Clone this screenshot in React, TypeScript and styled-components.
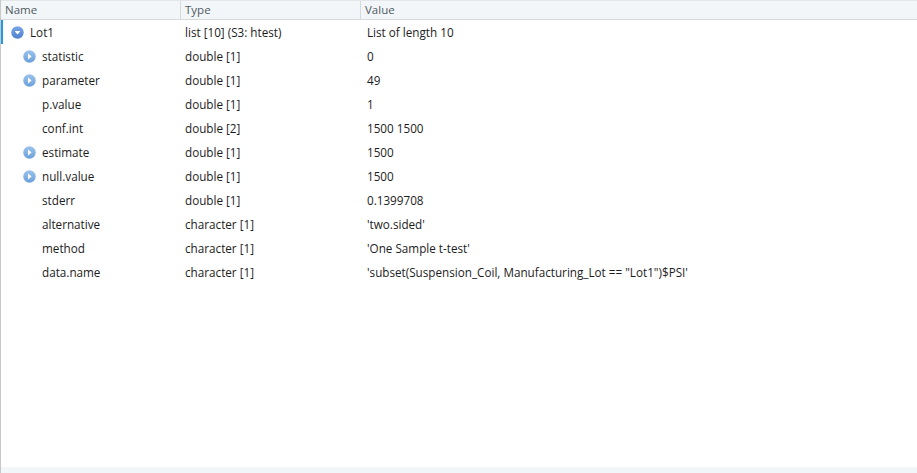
import styled, { createGlobalStyle } from 'styled-components';

const GlobalStyle = createGlobalStyle`
  html, body {
    margin: 0;
    padding: 0;
    background: #ffffff;
  }
  body {
    font-family: 'Open Sans', 'Noto Sans', 'Liberation Sans', sans-serif;
    font-size: 11.7px;
  }
`;

type Item = {
  name: string;
  type: string;
  value: string;
  expandable?: boolean;
};

const children: Item[] = [
  { name: 'statistic', type: 'double [1]', value: '0', expandable: true },
  { name: 'parameter', type: 'double [1]', value: '49', expandable: true },
  { name: 'p.value', type: 'double [1]', value: '1' },
  { name: 'conf.int', type: 'double [2]', value: '1500 1500' },
  { name: 'estimate', type: 'double [1]', value: '1500', expandable: true },
  { name: 'null.value', type: 'double [1]', value: '1500', expandable: true },
  { name: 'stderr', type: 'double [1]', value: '0.1399708' },
  { name: 'alternative', type: 'character [1]', value: "'two.sided'" },
  { name: 'method', type: 'character [1]', value: "'One Sample t-test'" },
  {
    name: 'data.name',
    type: 'character [1]',
    value: `'subset(Suspension_Coil, Manufacturing_Lot == "Lot1")$PSI'`,
  },
];

const ExpandIcon = ({ open, dark }: { open?: boolean; dark?: boolean }) => (
  <svg width="13" height="13" viewBox="0 0 13 13">
    <defs>
      <linearGradient id={dark ? 'gd' : 'gl'} x1="0" y1="0" x2="0" y2="1">
        <stop offset="0" stopColor={dark ? '#7aa6e6' : '#9cc4ec'} />
        <stop offset="1" stopColor={dark ? '#4f80d0' : '#6ba0da'} />
      </linearGradient>
    </defs>
    <circle cx="6.5" cy="6.5" r="6.2" fill={`url(#${dark ? 'gd' : 'gl'})`} />
    {open ? (
      <path d="M3.6 5 L9.4 5 L6.5 8.4 Z" fill="#ffffff" />
    ) : (
      <path d="M5 3.6 L8.6 6.5 L5 9.4 Z" fill="#ffffff" />
    )}
  </svg>
);

const App = () => {
  return (
    <>
      <GlobalStyle />
      <Pane>
        <Header>
          <HeadCell width={180}>Name</HeadCell>
          <HeadCell width={180}>Type</HeadCell>
          <HeadCell>Value</HeadCell>
        </Header>
        <Body>
          <Row selected>
            <NameCell indent={10}>
              <IconSlot>
                <ExpandIcon open dark />
              </IconSlot>
              Lot1
            </NameCell>
            <TypeCell>list [10] (S3: htest)</TypeCell>
            <ValueCell>List of length 10</ValueCell>
          </Row>
          {children.map((item) => (
            <Row key={item.name}>
              <NameCell indent={22}>
                <IconSlot>{item.expandable && <ExpandIcon />}</IconSlot>
                {item.name}
              </NameCell>
              <TypeCell>{item.type}</TypeCell>
              <ValueCell>{item.value}</ValueCell>
            </Row>
          ))}
        </Body>
        <Footer />
      </Pane>
    </>
  );
};

export default App;

const Pane = styled.div`
  display: flex;
  flex-direction: column;
  width: 917px;
  height: 473px;
  box-sizing: border-box;
  border-left: 1px solid #c8c8c8;
  color: #1c1c1c;
`;

const Header = styled.div`
  display: flex;
  height: 20px;
  background: #f2f6f8;
  border-bottom: 1px solid #d7d9db;
  border-top: 1px solid #e4e6e8;
  box-sizing: border-box;
`;

const HeadCell = styled.div<{ width?: number }>`
  ${(p) => (p.width ? `width: ${p.width}px;` : 'flex: 1;')}
  box-sizing: border-box;
  padding-left: 4px;
  line-height: 18px;
  color: #505a64;
  font-size: 11.5px;
  border-right: 1px solid #d7d9db;
  &:last-child {
    border-right: none;
  }
`;

const Body = styled.div`
  flex: 1;
  display: flex;
  flex-direction: column;
`;

const Row = styled.div<{ selected?: boolean }>`
  display: flex;
  height: 24px;
  align-items: center;
  box-shadow: ${(p) => (p.selected ? 'inset 2px 0 0 #1e9be4' : 'none')};
`;

const NameCell = styled.div<{ indent: number }>`
  display: flex;
  align-items: center;
  width: 180px;
  padding-left: ${(p) => p.indent}px;
  box-sizing: border-box;
`;

const IconSlot = styled.span`
  display: inline-flex;
  width: 13px;
  height: 13px;
  margin-right: 6px;
`;

const TypeCell = styled.div`
  width: 180px;
  padding-left: 4px;
  box-sizing: border-box;
`;

const ValueCell = styled.div`
  flex: 1;
  padding-left: 6px;
  white-space: nowrap;
`;

const Footer = styled.div`
  height: 6px;
  background: #f3f6f8;
`;
